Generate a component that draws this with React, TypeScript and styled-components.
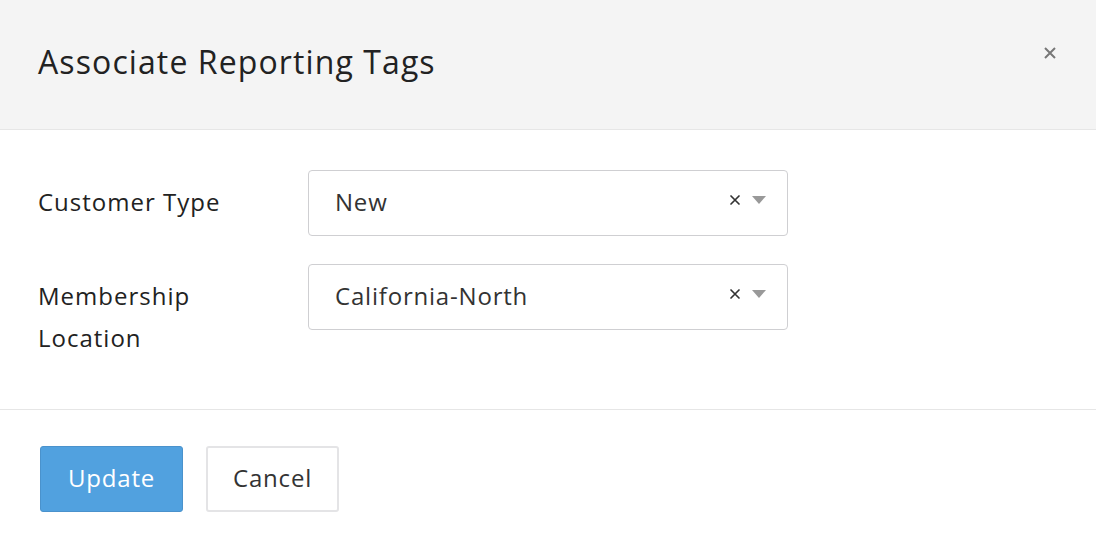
import React, { FC } from 'react'
import styled, { createGlobalStyle } from 'styled-components'

const Global = createGlobalStyle`
  html, body {
    margin: 0;
    padding: 0;
    background: #fff;
    font-family: "Open Sans", Lato, sans-serif;
    color: #222;
  }
`

const Modal = styled.div`
  width: 1096px;
  height: 548px;
  background: #fff;
  display: flex;
  flex-direction: column;
`

const Header = styled.div`
  height: 130px;
  background: #f4f4f4;
  border-bottom: 1px solid #e6e6e6;
  display: flex;
  align-items: center;
  justify-content: space-between;
  padding: 0 34px 0 38px;
  box-sizing: border-box;
`

const Title = styled.h1`
  margin: 0 0 6px;
  font-size: 32px;
  font-weight: 400;
  letter-spacing: 1.1px;
  color: #222;
`

const Close = styled.button`
  border: 0;
  background: none;
  padding: 0;
  width: 24px;
  height: 24px;
  align-self: flex-start;
  margin-top: 41px;
  display: flex;
  align-items: center;
  justify-content: center;
  cursor: pointer;
`

const Body = styled.div`
  padding: 40px 38px 50px;
  border-bottom: 1px solid #e6e6e6;
  display: flex;
  flex-direction: column;
  gap: 28px;
`

const Row = styled.div`
  display: flex;
  align-items: flex-start;
`

const Label = styled.label`
  width: 270px;
  padding-top: 11px;
  font-size: 24px;
  letter-spacing: 1px;
  line-height: 42px;
  color: #222;
`

const Select = styled.div`
  width: 480px;
  height: 66px;
  box-sizing: border-box;
  border: 1px solid #cfcfd2;
  border-radius: 4px;
  display: flex;
  align-items: center;
  padding: 0 20px 0 26px;
  font-size: 24px;
  letter-spacing: 0.8px;
  color: #333;
`

const Value = styled.span`
  flex: 1;
  margin-top: -4px;
`

const Controls = styled.span`
  display: flex;
  align-items: center;
  gap: 10px;
  margin-top: -6px;
`

const Footer = styled.div`
  padding: 36px 40px;
  display: flex;
  gap: 23px;
`

const Button = styled.button<{ $primary?: boolean }>`
  height: 66px;
  padding: 0 ${p => (p.$primary ? '27px' : '25px')} 4px;
  font-family: inherit;
  font-size: 24px;
  letter-spacing: 0.8px;
  border-radius: 3px;
  cursor: pointer;
  background: ${p => (p.$primary ? '#51a1df' : '#fff')};
  color: ${p => (p.$primary ? '#fff' : '#333')};
  border-style: solid;
  border-color: ${p => (p.$primary ? '#4a92cc' : '#e4e4e6')};
  border-width: ${p => (p.$primary ? '1px' : '2px')};
`

const ClearIcon = () => (
  <svg width="12" height="12" viewBox="0 0 12 12">
    <path d="M2 2 L10 10 M10 2 L2 10" stroke="#333" strokeWidth="1.7" strokeLinecap="round" />
  </svg>
)

const Caret = () => (
  <svg width="16" height="10" viewBox="0 0 16 10">
    <path d="M1 1 H15 L8 9 Z" fill="#999" />
  </svg>
)

const TagSelect: FC<{ value: string }> = ({ value }) => (
  <Select>
    <Value>{value}</Value>
    <Controls>
      <ClearIcon />
      <Caret />
    </Controls>
  </Select>
)

const App: FC = () => {
  return (
    <Modal>
      <Global />
      <Header>
        <Title>Associate Reporting Tags</Title>
        <Close aria-label="Close">
          <svg width="14" height="14" viewBox="0 0 14 14">
            <path d="M2 2 L12 12 M12 2 L2 12" stroke="#777" strokeWidth="2" />
          </svg>
        </Close>
      </Header>

      <Body>
        <Row>
          <Label>Customer Type</Label>
          <TagSelect value="New" />
        </Row>
        <Row>
          <Label>
            Membership
            <br />
            Location
          </Label>
          <TagSelect value="California-North" />
        </Row>
      </Body>

      <Footer>
        <Button $primary>Update</Button>
        <Button>Cancel</Button>
      </Footer>
    </Modal>
  )
}

export default App
